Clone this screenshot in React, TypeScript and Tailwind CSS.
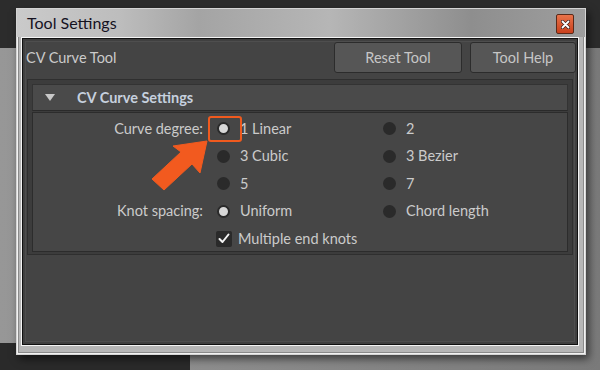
import React from "react";

function Radio({ on }: { on?: boolean }) {
  return on ? (
    <div className="w-[13px] h-[13px] rounded-full bg-[#d8d8d8] border-2 border-[#2a2a2a] shrink-0" />
  ) : (
    <div className="w-[13px] h-[13px] rounded-full bg-[#2a2a2a] shrink-0" />
  );
}

function Opt({ label, on, w }: { label: string; on?: boolean; w?: string }) {
  return (
    <div className={`flex items-center ${w ?? ""}`}>
      <Radio on={on} />
      <span className="ml-[10px]">{label}</span>
    </div>
  );
}

export default function App() {
  return (
    <div className="relative w-[600px] h-[370px] overflow-hidden pt-[8px] pl-[16px] font-[Lato,sans-serif] [background:linear-gradient(#2c2c2c,#2c2c2c)_0_0/100%_48px_no-repeat,linear-gradient(#2a2a2a,#2a2a2a)_0_343px/190px_27px_no-repeat,linear-gradient(to_right,#979797,#7a7a7a)]">
      {/* Window */}
      <div className="w-[570px] h-[347px] flex flex-col border border-[#d4d4d4] bg-[#b6b6b6] shadow-[3px_4px_8px_rgba(0,0,0,0.55),inset_0_0_0_1px_#f2f2f2,inset_0_0_0_2px_#8a8a8a]">
        {/* Title bar */}
        <div className="h-[28px] shrink-0 flex items-center justify-between pl-[10px] pr-[11px] bg-[linear-gradient(to_right,#cacaca_0%,#bdbdbd_18%,#a4a4a4_32%,#b6b6b6_55%,#8e8e8e_80%,#9e9e9e_100%)]">
          <span className="text-[16px] text-[#15121f] leading-none">Tool Settings</span>
          <div className="w-[18px] h-[20px] mt-[2px] rounded-[2px] border border-[#5a2a1a] bg-[linear-gradient(#e8734a,#c9401c)] flex items-center justify-center">
            <svg width="9" height="9" viewBox="0 0 9 9">
              <path d="M1.5 1.5 L7.5 7.5 M7.5 1.5 L1.5 7.5" stroke="#3a2020" strokeWidth="3.2" strokeLinecap="round" />
              <path d="M1.5 1.5 L7.5 7.5 M7.5 1.5 L1.5 7.5" stroke="#ffffff" strokeWidth="1.8" strokeLinecap="round" />
            </svg>
          </div>
        </div>
        {/* Frame + content */}
        <div className="ml-[5px] mr-[7px] mt-[1px] h-[307px] border border-[#111] shadow-[0_0_0_1px_#f4f4f4] bg-[#444444]">
          <div className="h-full flex flex-col shadow-[inset_0_0_0_2px_#404040,inset_0_0_0_3px_#4e4e4e] text-[14.5px] text-[#cbcbcb]">
            {/* Top row */}
            <div className="flex items-center pt-[3px] pl-[3px] pr-[1px] h-[34px] shrink-0">
              <span className="flex-1">CV Curve Tool</span>
              <button className="w-[128px] h-[31px] rounded-[3px] bg-[#565656] border border-[#2c2c2c] text-[#c6c6c6]">
                Reset Tool
              </button>
              <button className="ml-[8px] w-[106px] h-[31px] rounded-[3px] bg-[#565656] border border-[#2c2c2c] text-[#c6c6c6]">
                Tool Help
              </button>
            </div>
            {/* Section */}
            <div className="mt-[6px] mx-[4px] border border-[#2f2f2f] bg-[#3c3c3c] p-[4px] pb-[2px] flex flex-col gap-[1px]">
              <div className="h-[27px] flex items-center bg-[#4a4a4a] border border-[#333] border-b-[#2a2a2a]">
                <svg width="10" height="7" viewBox="0 0 10 7" className="ml-[12px]">
                  <path d="M0 0 L10 0 L5 7 Z" fill="#c8c8c8" />
                </svg>
                <span className="ml-[22px] font-bold text-[#c6d0de]">CV Curve Settings</span>
              </div>
              <div className="h-[140px] border border-[#2c2c2c] bg-[#464646] pt-[2px]">
                <div className="flex items-center h-[27.5px]">
                  <div className="w-[170px] text-right">Curve degree:</div>
                  <div className="ml-[14px]"><Opt label="1 Linear" on w="w-[166px]" /></div>
                  <Opt label="2" />
                </div>
                <div className="flex items-center h-[27.5px]">
                  <div className="w-[170px]" />
                  <div className="ml-[14px]"><Opt label="3 Cubic" w="w-[166px]" /></div>
                  <Opt label="3 Bezier" />
                </div>
                <div className="flex items-center h-[27.5px]">
                  <div className="w-[170px]" />
                  <div className="ml-[14px]"><Opt label="5" w="w-[166px]" /></div>
                  <Opt label="7" />
                </div>
                <div className="flex items-center h-[27.5px]">
                  <div className="w-[170px] text-right">Knot spacing:</div>
                  <div className="ml-[14px]"><Opt label="Uniform" on w="w-[166px]" /></div>
                  <Opt label="Chord length" />
                </div>
                <div className="flex items-center h-[27.5px]">
                  <div className="w-[170px]" />
                  <div className="ml-[13px] flex items-center">
                    <div className="w-[16px] h-[16px] rounded-[2px] bg-[#2a2a2a] flex items-center justify-center">
                      <svg width="12" height="11" viewBox="0 0 12 11">
                        <path d="M1.5 6 L4.5 9 L10.5 1.5" stroke="#f4f4f4" strokeWidth="2" fill="none" strokeLinecap="round" strokeLinejoin="round" />
                      </svg>
                    </div>
                    <span className="ml-[6px]">Multiple end knots</span>
                  </div>
                </div>
              </div>
            </div>
          </div>
        </div>
      </div>
      {/* Orange highlight overlay */}
      <div className="absolute left-[208px] top-[116px] w-[34px] h-[26px] border-2 border-[#f05a1e] rounded-[3px]" />
      <svg className="absolute left-0 top-0 pointer-events-none" width="600" height="370" viewBox="0 0 600 370">
        <polygon
          points="207,141 200,173 192,164 164,190 152,179 181,152 173,146"
          fill="#f25a1f"
          strokeLinejoin="round"
          stroke="#f25a1f"
          strokeWidth="1"
        />
      </svg>
    </div>
  );
}
